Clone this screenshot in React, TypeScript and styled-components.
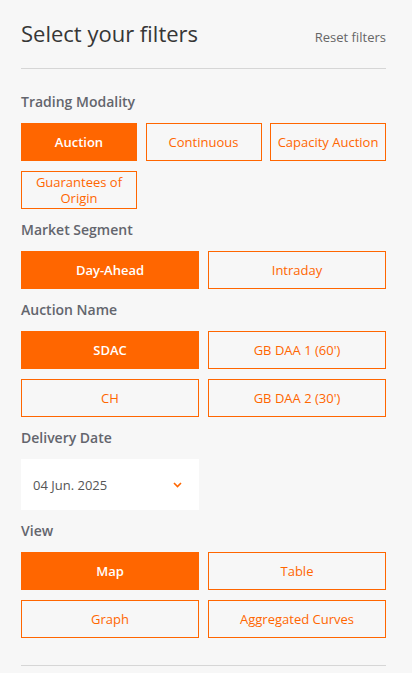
import React, { useState } from "react";
import styled, { createGlobalStyle } from "styled-components";

const GlobalStyle = createGlobalStyle`
  html, body { margin: 0; padding: 0; background: #f7f7f7; }
  body { font-family: "Open Sans", "Noto Sans", sans-serif; -webkit-font-smoothing: antialiased; }
  * { box-sizing: border-box; }
`;

const ORANGE = "#ff6600";

const Panel = styled.div`
  width: 412px;
  min-height: 673px;
  background: #f7f7f7;
  padding: 18px 26px 0 21px;
  display: flex;
  flex-direction: column;
`;

const Header = styled.div`
  display: flex;
  justify-content: space-between;
  align-items: baseline;
  height: 50px;
`;

const Title = styled.h1`
  margin: 0;
  font-size: 22px;
  line-height: 30px;
  font-weight: 400;
  color: #363636;
`;

const ResetLink = styled.button`
  border: 0;
  background: none;
  padding: 0;
  font-family: inherit;
  font-size: 13px;
  color: #666;
  cursor: pointer;
`;

const Divider = styled.hr`
  margin: 0;
  border: 0;
  border-top: 1px solid #d6d6d6;
`;

const Sections = styled.div`
  display: flex;
  flex-direction: column;
  gap: 9px;
  padding-top: 21px;
`;

const Section = styled.section`
  display: flex;
  flex-direction: column;
  gap: 11px;
`;

const Label = styled.h3`
  margin: 2px 0 0;
  font-size: 14px;
  line-height: 20px;
  font-weight: 600;
  color: #63656d;
`;

const Grid = styled.div<{ $cols: number }>`
  display: grid;
  grid-template-columns: repeat(${(p) => p.$cols}, 1fr);
  column-gap: ${(p) => (p.$cols === 3 ? "8.5px" : "9px")};
  row-gap: 10px;
`;

const Option = styled.button<{ $active?: boolean }>`
  height: 38px;
  padding: 0 4px;
  border: 1px solid ${ORANGE};
  background: ${(p) => (p.$active ? ORANGE : "transparent")};
  color: ${(p) => (p.$active ? "#fff" : ORANGE)};
  font-family: inherit;
  font-size: 13px;
  line-height: 16px;
  font-weight: ${(p) => (p.$active ? 600 : 400)};
  cursor: pointer;
`;

const DateRow = styled.div`
  display: grid;
  grid-template-columns: repeat(2, 1fr);
  column-gap: 9px;
`;

const DateSelect = styled.div`
  height: 51px;
  background: #fff;
  display: flex;
  align-items: center;
  justify-content: space-between;
  padding: 0 17px 0 12px;
  font-size: 13px;
  color: #555;
`;

const BottomDivider = styled(Divider)`
  margin-top: 27px;
`;

const Chevron = () => (
  <svg width="9" height="6" viewBox="0 0 9 6">
    <path d="M1 1 L4.5 4.5 L8 1" fill="none" stroke={ORANGE} strokeWidth="1.6" />
  </svg>
);

type Group = { label: string; cols: number; options: string[]; active: string };

const groups: Group[] = [
  { label: "Trading Modality", cols: 3, options: ["Auction", "Continuous", "Capacity Auction", "Guarantees of Origin"], active: "Auction" },
  { label: "Market Segment", cols: 2, options: ["Day-Ahead", "Intraday"], active: "Day-Ahead" },
  { label: "Auction Name", cols: 2, options: ["SDAC", "GB DAA 1 (60')", "CH", "GB DAA 2 (30')"], active: "SDAC" },
];

const viewGroup: Group = { label: "View", cols: 2, options: ["Map", "Table", "Graph", "Aggregated Curves"], active: "Map" };

function OptionGroup({ g }: { g: Group }) {
  const [active, setActive] = useState(g.active);
  return (
    <Section>
      <Label>{g.label}</Label>
      <Grid $cols={g.cols}>
        {g.options.map((o) => (
          <Option key={o} $active={o === active} onClick={() => setActive(o)}>
            {o}
          </Option>
        ))}
      </Grid>
    </Section>
  );
}

export default function App() {
  return (
    <>
      <GlobalStyle />
      <Panel>
        <Header>
          <Title>Select your filters</Title>
          <ResetLink>Reset filters</ResetLink>
        </Header>
        <Divider />
        <Sections>
          {groups.map((g) => (
            <OptionGroup key={g.label} g={g} />
          ))}
          <Section>
            <Label>Delivery Date</Label>
            <DateRow>
              <DateSelect>
                <span>04 Jun. 2025</span>
                <Chevron />
              </DateSelect>
            </DateRow>
          </Section>
          <OptionGroup g={viewGroup} />
        </Sections>
        <BottomDivider />
      </Panel>
    </>
  );
}
